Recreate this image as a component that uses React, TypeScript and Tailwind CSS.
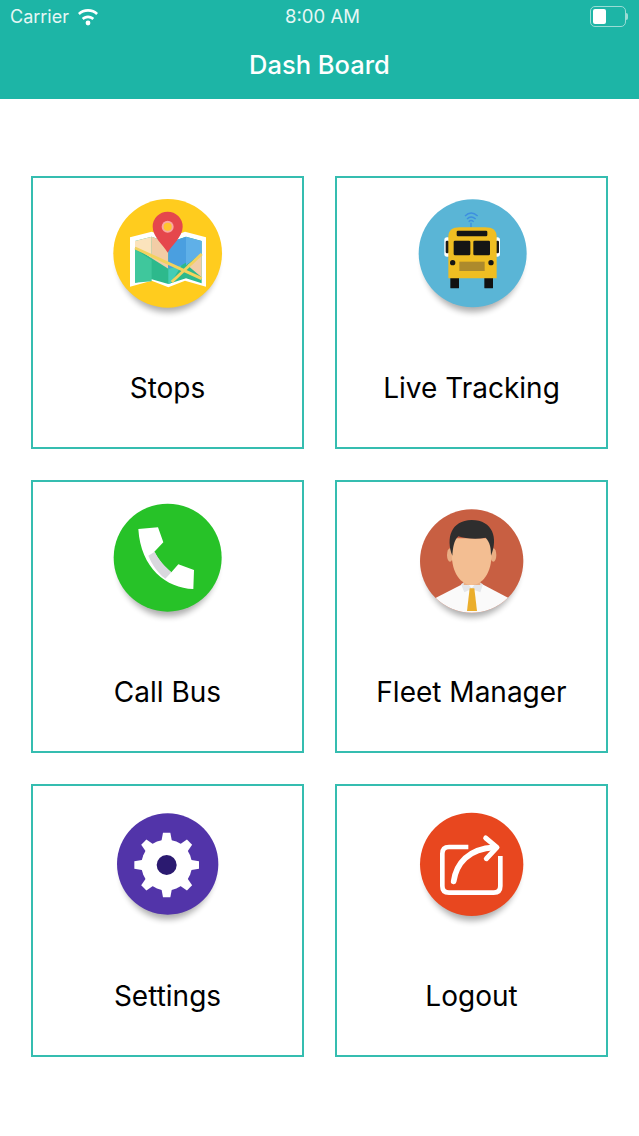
const Shadow = ({ cx, cy, r }: { cx: number; cy: number; r: number }) => (
  <ellipse cx={cx} cy={cy + 20} rx={r - 14} ry={r - 6} fill="#000" opacity="0.32" filter="url(#sh)" />
);

const Defs = () => (
  <defs>
    <filter id="sh" x="-30%" y="-30%" width="160%" height="160%">
      <feGaussianBlur stdDeviation="9" />
    </filter>
  </defs>
);

const Stops = () => (
  <g>
    <Shadow cx={203} cy={190} r={163} />
    <circle cx="203" cy="190" r="163" fill="#FFCC1E" />
    <polygon points="90,142 155,125 205,143 255,125 318,142 318,290 255,272 205,292 155,272 90,290" fill="#fff" />
    <polygon points="105,153 155,140 205,158 258,140 305,153 305,280 258,265 205,282 155,268 105,278" fill="#2DB98C" />
    <polygon points="105,153 155,140 155,205 105,172" fill="#FBE3BC" />
    <polygon points="155,140 205,158 205,236 155,205" fill="#F2CDA6" />
    <polygon points="205,158 258,140 258,218 240,228 205,236" fill="#4A9FE0" />
    <polygon points="258,140 305,153 305,190 258,226" fill="#5FB0E8" />
    <polygon points="105,178 155,210 155,274 105,278" fill="#3FC79C" />
    <polygon points="205,236 245,226 212,280 205,282" fill="#45CDB6" />
    <polygon points="262,226 305,195 305,262" fill="#F2CDA6" />
    <path d="M105 174 L305 266" stroke="#F3D25E" strokeWidth="9" fill="none" />
    <path d="M305 192 L215 276" stroke="#F3D25E" strokeWidth="9" fill="none" />
    <path d="M203 188 C190 165 158 140 158 110 A45 45 0 0 1 248 110 C248 140 216 165 203 188Z" fill="#E5474C" />
    <circle cx="203" cy="110" r="18" fill="#F9A9A0" />
    <circle cx="203" cy="110" r="12" fill="#FFC52E" />
  </g>
);

const Bus = () => (
  <g>
    <Shadow cx={203} cy={190} r={162} />
    <circle cx="203" cy="190" r="162" fill="#5AB5D6" />
    <g fill="none" stroke="#3D8FE0" strokeWidth="4">
      <path d="M180 78 Q198 60 218 78" />
      <path d="M186 87 Q198 75 212 87" />
      <path d="M191 95 Q198 88 206 95" />
    </g>
    <path d="M198 98 V112" stroke="#3D8FE0" strokeWidth="4" />
    <rect x="118" y="142" width="18" height="58" rx="8" fill="#fff" />
    <rect x="268" y="142" width="17" height="58" rx="8" fill="#fff" />
    <rect x="122" y="152" width="10" height="38" rx="4" fill="#1a1a1a" />
    <rect x="272" y="152" width="10" height="38" rx="4" fill="#1a1a1a" />
    <rect x="136" y="262" width="26" height="33" rx="2" fill="#111" />
    <rect x="238" y="262" width="26" height="33" rx="2" fill="#111" />
    <path d="M130 140 Q130 112 165 112 H240 Q275 112 275 140 V265 H130Z" fill="#F0BE22" />
    <rect x="155" y="122" width="92" height="17" rx="4" fill="#151515" />
    <rect x="146" y="152" width="50" height="44" rx="4" fill="#151515" />
    <rect x="205" y="152" width="50" height="44" rx="4" fill="#151515" />
    <circle cx="143" cy="218" r="8" fill="#151515" />
    <circle cx="258" cy="218" r="8" fill="#151515" />
    <rect x="163" y="215" width="76" height="28" fill="#AD8A2C" />
  </g>
);

const Phone = () => (
  <g>
    <Shadow cx={203} cy={188} r={162} />
    <circle cx="203" cy="188" r="162" fill="#27C228" />
    <path d="M115 102 L174 97 L190 142 L163 170 C175 195 195 216 214 232 L235 208 L282 225 L280 282 C200 280 122 220 115 102Z" fill="#fff" />
    <path d="M145 182 L164 170 C176 195 196 216 214 232 L196 251 C172 233 156 208 145 182Z" fill="#D9D8DE" />
  </g>
);

const Manager = () => (
  <g>
    <Shadow cx={200} cy={198} r={155} />
    <circle cx="200" cy="198" r="155" fill="#C85F42" />
    <clipPath id="mgr"><circle cx="200" cy="198" r="155" /></clipPath>
    <g clipPath="url(#mgr)">
      <path d="M90 310 L172 268 H232 L312 310 V360 H90Z" fill="#FAFAFA" />
      <path d="M168 268 L182 258 L200 280 L218 258 L234 268 L226 292 L200 282 L178 292Z" fill="#E4E6EA" />
      <rect x="176" y="225" width="50" height="45" fill="#E9AE84" />
      <ellipse cx="135" cy="180" rx="9" ry="20" fill="#E9AE84" />
      <ellipse cx="265" cy="180" rx="9" ry="20" fill="#E9AE84" />
      <path d="M140 130 H260 V175 C260 235 232 270 200 270 C168 270 140 235 140 175Z" fill="#F3BE92" />
      <path d="M142 182 C122 130 138 76 200 75 C264 75 280 130 258 182 C258 160 256 144 242 128 C212 134 180 130 160 124 C146 136 144 160 142 182Z" fill="#2E2E2E" />
      <polygon points="194,280 208,280 216,348 186,348" fill="#EBAE2C" />
    </g>
  </g>
);

const gearTeeth = [0, 45, 90, 135, 180, 225, 270, 315];
const Settings = () => (
  <g>
    <Shadow cx={203} cy={192} r={152} />
    <circle cx="203" cy="192" r="152" fill="#5234A9" />
    <circle cx="200" cy="195" r="76" fill="#fff" />
    {gearTeeth.map((a) => (
      <path key={a} d="M184 125 L189 98 H211 L216 125Z" fill="#fff" transform={`rotate(${a} 200 195)`} />
    ))}
    <circle cx="200" cy="195" r="30" fill="#2B1A70" />
  </g>
);

const Logout = () => (
  <g>
    <Shadow cx={200} cy={193} r={155} />
    <circle cx="200" cy="193" r="155" fill="#E8471F" />
    <path d="M190 141 H132 Q112 141 112 161 V258 Q112 278 132 278 H266 Q286 278 286 258 V168" fill="none" stroke="#fff" strokeWidth="14" />
    <path d="M146 244 C154 190 190 146 268 142" fill="none" stroke="#fff" strokeWidth="17" strokeLinecap="round" />
    <path d="M242 114 L276 142 L244 176" fill="none" stroke="#fff" strokeWidth="15" strokeLinecap="round" strokeLinejoin="round" />
  </g>
);

const items = [
  { label: "Stops", Icon: Stops, vb: "0 3 405 405" },
  { label: "Live Tracking", Icon: Bus, vb: "-3 3 405 405" },
  { label: "Call Bus", Icon: Phone, vb: "0 0 405 405" },
  { label: "Fleet Manager", Icon: Manager, vb: "-3 0 405 405" },
  { label: "Settings", Icon: Settings, vb: "0 -3 405 405" },
  { label: "Logout", Icon: Logout, vb: "-3 -3 405 405" },
];

export default function App() {
  return (
    <div className="w-[639px] h-[1136px] bg-white font-['Inter','Roboto',sans-serif] overflow-hidden">
      <header className="h-[99px] bg-[#1DB5A6] text-white">
        <div className="h-[33px] grid grid-cols-3 items-center px-[10px]">
          <div className="flex items-center gap-[8px] text-[18px] text-[#e6f7f5]">
            <span>Carrier</span>
            <svg width="22" height="18" viewBox="0 0 22 18" fill="#fff">
              <path d="M11 3C7 3 3.5 4.6 1 7l1.8 2C5 7 7.8 5.8 11 5.8S17 7 19.2 9L21 7c-2.5-2.4-6-4-10-4z" transform="translate(0 -2)" />
              <path d="M11 7.5c-2.4 0-4.6 1-6.2 2.5l1.9 2c1.1-1.1 2.6-1.8 4.3-1.8s3.2.7 4.3 1.8l1.9-2c-1.6-1.5-3.8-2.5-6.2-2.5z" />
              <circle cx="11" cy="15" r="2.4" />
            </svg>
          </div>
          <div className="text-center pl-[6px] text-[18.5px] text-[#e6f7f5]">8:00 AM</div>
          <div className="flex justify-end items-center pr-px">
            <div className="w-[36px] h-[21px] rounded-[5px] border border-[#9adcd5] p-[2px]">
              <div className="w-[13px] h-full rounded-[2px] bg-white" />
            </div>
            <div className="w-[2px] h-[7px] rounded-r-sm bg-[#9adcd5]" />
          </div>
        </div>
        <div className="h-[66px] pb-[1px] flex items-center justify-center text-[25.5px] font-medium">Dash Board</div>
      </header>
      <main className="pt-[77px] px-[31px] grid grid-cols-[273px_273px] gap-x-[31px] gap-y-[31px]">
        {items.map(({ label, Icon, vb }) => (
          <div key={label} className="h-[273px] border-2 border-[#35bdb0] flex flex-col items-center pt-[13px]">
            <svg width="135" height="135" viewBox={vb} className="blur-[0.4px] shrink-0">
              <Defs />
              <Icon />
            </svg>
            <div className="mt-[42px] text-[28px] leading-[40px] text-black">{label}</div>
          </div>
        ))}
      </main>
    </div>
  );
}
